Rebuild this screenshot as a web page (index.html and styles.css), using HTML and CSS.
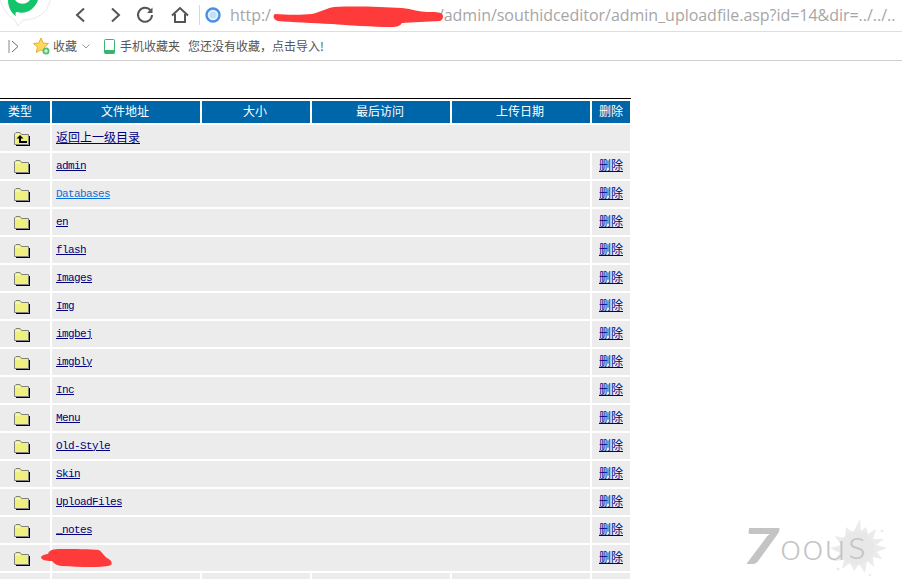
FILE: index.html
```html
<!DOCTYPE html>
<html lang="zh">
<head>
<meta charset="utf-8">
<title>admin_uploadfile</title>
<link rel="stylesheet" href="styles.css">
</head>
<body>
<svg class="defs" width="0" height="0">
  <defs>
    <pattern id="dither" width="2" height="2" patternUnits="userSpaceOnUse">
      <rect width="2" height="2" fill="#ffff00"/>
      <rect width="1" height="1" fill="#f0f080"/>
      <rect x="1" y="1" width="1" height="1" fill="#f0f080"/>
    </pattern>
    <symbol id="folder" viewBox="0 0 16 14">
      <path d="M2 14h14V4h-1v9H2z" fill="#000"/>
      <path d="M0.5 12.5V2L2 0.5h4L7.5 2.500h7v10z" fill="url(#dither)" stroke="#808080"/>
      <path d="M1 3h5" stroke="#ffffc0" fill="none"/>
    </symbol>
  </defs>
</svg>

<header class="toolbar">
  <svg class="logo" width="52" height="27" viewBox="0 0 52 27">
    <path d="M0-3h50v3c-1 8-6 14-15 18-3 1-8 2-12 2l-5 6-3-6C9 17 3 9 0 0z" fill="#fff" stroke="#e8e8e8"/>
    <path d="M8 0C8 7 11 13 16 16 15 13 15.500 12 17 12 26 15 35 9 38 0H30C27 4 20 6 15 0z" fill="#12c56b"/>
  </svg>
  <button class="tool tool-back" aria-label="后退">
    <svg width="12" height="16" viewBox="0 0 12 16"><path d="M10 1.500 3 8l7 6.500" fill="none" stroke="#555" stroke-width="2"/></svg>
  </button>
  <button class="tool tool-forward" aria-label="前进">
    <svg width="12" height="16" viewBox="0 0 12 16"><path d="M2 1.500 9 8l-7 6.500" fill="none" stroke="#555" stroke-width="2"/></svg>
  </button>
  <button class="tool tool-reload" aria-label="刷新">
    <svg width="18" height="18" viewBox="0 0 18 18"><path d="M14.500 4.500A7 7 0 1 0 16 9" fill="none" stroke="#555" stroke-width="2"/><path d="M16.500 1.500v5.500h-5.500z" fill="#555"/></svg>
  </button>
  <button class="tool tool-home" aria-label="主页">
    <svg width="18" height="18" viewBox="0 0 18 18"><path d="M1 9.500 9 2l8 7.500M4 8v8h10V8" fill="none" stroke="#555" stroke-width="2"/></svg>
  </button>
  <span class="divider"></span>
  <svg class="globe" width="16" height="16" viewBox="0 0 16 16">
    <circle cx="8" cy="8" r="6.500" fill="#e8f3ff" stroke="#4a90e2" stroke-width="2.400"/>
    <circle cx="8" cy="8" r="3.500" fill="#bfe0fa"/>
  </svg>
  <div class="url">
    <span>http:/</span><span class="url-hidden"></span><span>/admin/southidceditor/admin_uploadfile.asp?id=14&amp;dir=../../..</span>
    <svg class="scribble-url" width="172" height="22" viewBox="0 0 172 22"><path d="M3 8C15 9 30 9 40 8 48 6 55 2 62 1 85 0 110 1 130 2 140 3 148 6 155 6 162 6 168 6 170 8 172 10 171 14 168 15 155 16 140 16 130 17 128 20 125 21 120 21 100 21 75 19 60 18 40 17 20 16 6 15 2 14 0 10 3 8z" fill="#ff3a3a"/></svg>
  </div>
</header>

<nav class="bookmarks">
  <svg class="side-toggle" width="11" height="13" viewBox="0 0 11 13"><path d="M1 0v13" stroke="#888"/><path d="m4 1 6 5.500-6 5.500" fill="none" stroke="#666"/></svg>
  <svg class="star" width="17" height="18" viewBox="0 0 17 18">
    <path d="m8 1 2.200 5 5.300.5-4 3.600 1.200 5.400L8 12.800l-4.700 2.700 1.200-5.400-4-3.600L5.800 6z" fill="#ffd75a" stroke="#e6b030"/>
    <circle cx="13" cy="14" r="3.500" fill="#4cc36a"/>
    <path d="M13 12v4M11 14h4" stroke="#fff"/>
  </svg>
  <span class="bm bm-fav">收藏</span>
  <svg class="chevron" width="8" height="5" viewBox="0 0 8 5"><path d="m.5.500 3.500 3.500 3.500-3.500" fill="none" stroke="#999"/></svg>
  <svg class="phone" width="11" height="15" viewBox="0 0 11 15"><rect x=".5" y=".5" width="10" height="14" rx="1" fill="#fff" stroke="#3cb371"/><rect x=".5" y="11" width="10" height="3.500" fill="#3cb371"/></svg>
  <span class="bm bm-phone">手机收藏夹</span>
  <span class="bm bm-hint">您还没有收藏，点击导入!</span>
</nav>

<main class="content">
  <div class="table-wrap">
    <table class="files">
      <colgroup>
        <col class="c-type"><col class="c-path"><col class="c-size"><col class="c-visit"><col class="c-date"><col class="c-del">
      </colgroup>
      <thead>
        <tr><th class="th-type">类型</th><th>文件地址</th><th>大小</th><th>最后访问</th><th>上传日期</th><th class="th-del">删除</th></tr>
      </thead>
      <tbody>
        <tr>
          <td class="icon"><svg class="folder" width="16" height="14" viewBox="0 0 16 14"><use href="#folder"/><path d="M6 3 2.500 6.500H5V11H13V9H7V6.500H9.500z" fill="#000"/></svg></td>
          <td colspan="5"><a class="cjk" href="#">返回上一级目录</a></td>
        </tr>
        <tr><td class="icon"><svg class="folder" width="16" height="14"><use href="#folder"/></svg></td><td colspan="4"><a class="mono" href="#">admin</a></td><td class="del"><a class="cjk" href="#">删除</a></td></tr>
        <tr><td class="icon"><svg class="folder" width="16" height="14"><use href="#folder"/></svg></td><td colspan="4"><a class="mono visited" href="#">Databases</a></td><td class="del"><a class="cjk" href="#">删除</a></td></tr>
        <tr><td class="icon"><svg class="folder" width="16" height="14"><use href="#folder"/></svg></td><td colspan="4"><a class="mono" href="#">en</a></td><td class="del"><a class="cjk" href="#">删除</a></td></tr>
        <tr><td class="icon"><svg class="folder" width="16" height="14"><use href="#folder"/></svg></td><td colspan="4"><a class="mono" href="#">flash</a></td><td class="del"><a class="cjk" href="#">删除</a></td></tr>
        <tr><td class="icon"><svg class="folder" width="16" height="14"><use href="#folder"/></svg></td><td colspan="4"><a class="mono" href="#">Images</a></td><td class="del"><a class="cjk" href="#">删除</a></td></tr>
        <tr><td class="icon"><svg class="folder" width="16" height="14"><use href="#folder"/></svg></td><td colspan="4"><a class="mono" href="#">Img</a></td><td class="del"><a class="cjk" href="#">删除</a></td></tr>
        <tr><td class="icon"><svg class="folder" width="16" height="14"><use href="#folder"/></svg></td><td colspan="4"><a class="mono" href="#">imgbej</a></td><td class="del"><a class="cjk" href="#">删除</a></td></tr>
        <tr><td class="icon"><svg class="folder" width="16" height="14"><use href="#folder"/></svg></td><td colspan="4"><a class="mono" href="#">imgbly</a></td><td class="del"><a class="cjk" href="#">删除</a></td></tr>
        <tr><td class="icon"><svg class="folder" width="16" height="14"><use href="#folder"/></svg></td><td colspan="4"><a class="mono" href="#">Inc</a></td><td class="del"><a class="cjk" href="#">删除</a></td></tr>
        <tr><td class="icon"><svg class="folder" width="16" height="14"><use href="#folder"/></svg></td><td colspan="4"><a class="mono" href="#">Menu</a></td><td class="del"><a class="cjk" href="#">删除</a></td></tr>
        <tr><td class="icon"><svg class="folder" width="16" height="14"><use href="#folder"/></svg></td><td colspan="4"><a class="mono" href="#">Old-Style</a></td><td class="del"><a class="cjk" href="#">删除</a></td></tr>
        <tr><td class="icon"><svg class="folder" width="16" height="14"><use href="#folder"/></svg></td><td colspan="4"><a class="mono" href="#">Skin</a></td><td class="del"><a class="cjk" href="#">删除</a></td></tr>
        <tr><td class="icon"><svg class="folder" width="16" height="14"><use href="#folder"/></svg></td><td colspan="4"><a class="mono" href="#">UploadFiles</a></td><td class="del"><a class="cjk" href="#">删除</a></td></tr>
        <tr><td class="icon"><svg class="folder" width="16" height="14"><use href="#folder"/></svg></td><td colspan="4"><a class="mono" href="#">_notes</a></td><td class="del"><a class="cjk" href="#">删除</a></td></tr>
        <tr>
          <td class="icon"><svg class="folder" width="16" height="14"><use href="#folder"/></svg></td>
          <td colspan="4"></td>
          <td class="del"><a class="cjk" href="#">删除</a></td>
        </tr>
        <tr><td class="icon"><span class="file-icon"></span></td><td></td><td></td><td></td><td></td><td></td></tr>
      </tbody>
    </table>
  </div>
  <svg class="scribble-row" width="72" height="20" viewBox="0 0 72 20"><path d="M0 9C1 7 5 6 7 6 8 2 12 1 20 1 32 1 50 1 58 2 61 4 63 8 66 10 70 12 72 15 70 17 64 20 40 19 20 18 14 17 12 14 11 13 5 13 0 12 0 9z" fill="#ff3a3a"/></svg>
</main>

<div class="watermark">
  <svg class="splat" width="66" height="66" viewBox="0 0 66 66">
    <path d="M36 4 37 16 42 12 44 19 52 14 49 24 60 24 52 30 63 33 53 37 58 44 49 42 50 52 43 46 41 58 35 49 30 56 26 48 18 54 20 45 9 46 16 38 6 33 17 30 11 21 21 23 22 12 29 18z" fill="#ebebeb"/>
    <circle cx="33" cy="33" r="17" fill="#e8e8e8"/>
    <circle cx="58" cy="16" r="1.500" fill="#ebebeb"/>
    <circle cx="14" cy="54" r="1.500" fill="#ebebeb"/>
    <circle cx="46" cy="60" r="1.200" fill="#ebebeb"/>
  </svg>
  <span class="wm-seven">7</span><span class="wm-rest">oou</span><span class="wm-s">s</span>
</div>
</body>
</html>
```
FILE: styles.css
```css
* { box-sizing: border-box; }
html, body { margin: 0; height: 100%; overflow: hidden; background: #fff; }
body {
  position: relative;
  font-family: "Noto Sans CJK SC", "Noto Sans", sans-serif;
  font-size: 12px;
}
.defs { position: absolute; }

.toolbar {
  position: relative;
  display: flex;
  align-items: center;
  height: 32px;
  border-bottom: 1px solid #dedede;
  padding-left: 74px;
  padding-bottom: 2px;
}
.logo { position: absolute; left: 0; top: 0; }
.tool {
  display: flex;
  padding: 0;
  border: 0;
  background: none;
}
.tool-back { margin-right: 24px; }
.tool-forward { margin-right: 14px; }
.tool-reload { margin-right: 17px; }
.tool-home { margin-right: 10px; }
.divider { width: 1px; height: 20px; background: #d8d8d8; margin-right: 5px; }
.globe { margin-right: 9px; }
.url {
  position: relative;
  display: flex;
  white-space: nowrap;
  font-family: "Open Sans", "Noto Sans", sans-serif;
  font-size: 16px;
  letter-spacing: -0.03px;
  color: #a6a6a6;
}
.url-hidden { width: 167px; }
.scribble-url { position: absolute; left: 42px; top: 2px; }

.bookmarks {
  display: flex;
  align-items: center;
  height: 29px;
  border-bottom: 1px solid #d0d0d0;
  padding-left: 8px;
  color: #555;
}
.side-toggle { margin-right: 14px; }
.star { margin-right: 3px; }
.bm { white-space: nowrap; line-height: 16px; }
.chevron { margin: 0 14px 0 5px; }
.phone { margin-right: 5px; }
.bm-phone { margin-right: 8px; }

.content { position: relative; padding-top: 37px; }
.table-wrap {
  width: 631px;
  border-top: 1px solid #000;
  overflow: hidden;
}
.files {
  table-layout: fixed;
  width: 634px;
  margin-left: -2px;
  border-collapse: separate;
  border-spacing: 2px;
}
.c-type { width: 50px; }
.c-path { width: 148px; }
.c-size { width: 108px; }
.c-visit { width: 138px; }
.c-date { width: 138px; }
.c-del { width: 38px; }
.files th {
  height: 22px;
  padding: 0 2px 2px 0;
  background: #0066aa;
  color: #fff;
  font-weight: 400;
  font-size: 12px;
  line-height: 20px;
  text-align: center;
}
.files th.th-type { padding-right: 10px; }
.files th.th-del { padding-right: 0; }
.files td {
  height: 26px;
  padding: 0 0 4px 4px;
  background: #ececec;
}
.files td.icon { padding: 0; text-align: left; }
.files td.del { padding: 0 0 4px; text-align: center; }
.folder { display: block; margin: 7px 0 5px 14px; }
.file-icon { display: block; width: 18px; height: 16px; margin: 5px 0 0 12px; background: #fff; }

a { color: #000080; text-decoration: underline; }
a.cjk { font-size: 12px; line-height: 16px; }
a.mono {
  font-family: "Liberation Mono", "DejaVu Sans Mono", monospace;
  font-size: 11px;
  letter-spacing: -0.6px;
  line-height: 12px;
  vertical-align: 1px;
}
a.visited { color: #0a6fd8; }
.scribble-row { position: absolute; left: 41px; top: 487px; }

.watermark {
  position: absolute;
  left: 746px;
  top: 512px;
  width: 156px;
  height: 67px;
  color: #c4c4c4;
  font-family: "Lato", sans-serif;
  white-space: nowrap;
}
.splat { position: absolute; left: 78px; top: 3px; }
.wm-seven {
  position: absolute;
  left: -4px;
  top: 3px;
  font-size: 50px;
  line-height: 60px;
  font-weight: 900;
  font-style: italic;
  transform: scaleX(1.3);
  transform-origin: left center;
}
.wm-rest {
  position: absolute;
  left: 34px;
  top: 10px;
  font-size: 38px;
  line-height: 46px;
  font-weight: 300;
  letter-spacing: 1px;
}
.wm-s {
  position: absolute;
  left: 102px;
  top: 8px;
  font-size: 42px;
  line-height: 46px;
  font-weight: 300;
}
```
